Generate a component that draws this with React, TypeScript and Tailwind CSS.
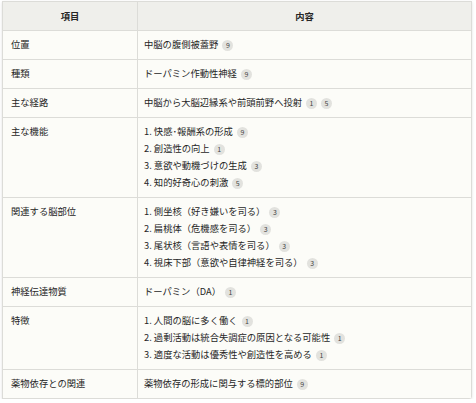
import React from "react";

type Item = { text: string; refs: number[] };
type Row = { label: string; items: Item[]; list?: boolean };

const rows: Row[] = [
  { label: "位置", items: [{ text: "中脳の腹側被蓋野", refs: [9] }] },
  { label: "種類", items: [{ text: "ドーパミン作動性神経", refs: [9] }] },
  { label: "主な経路", items: [{ text: "中脳から大脳辺縁系や前頭前野へ投射", refs: [1, 5] }] },
  {
    label: "主な機能",
    list: true,
    items: [
      { text: "快感･報酬系の形成", refs: [9] },
      { text: "創造性の向上", refs: [1] },
      { text: "意欲や動機づけの生成", refs: [3] },
      { text: "知的好奇心の刺激", refs: [5] },
    ],
  },
  {
    label: "関連する脳部位",
    list: true,
    items: [
      { text: "側坐核（好き嫌いを司る）", refs: [3] },
      { text: "扁桃体（危機感を司る）", refs: [3] },
      { text: "尾状核（言語や表情を司る）", refs: [3] },
      { text: "視床下部（意欲や自律神経を司る）", refs: [3] },
    ],
  },
  { label: "神経伝達物質", items: [{ text: "ドーパミン（DA）", refs: [1] }] },
  {
    label: "特徴",
    list: true,
    items: [
      { text: "人間の脳に多く働く", refs: [1] },
      { text: "過剰活動は統合失調症の原因となる可能性", refs: [1] },
      { text: "適度な活動は優秀性や創造性を高める", refs: [1] },
    ],
  },
  { label: "薬物依存との関連", items: [{ text: "薬物依存の形成に関与する標的部位", refs: [9] }] },
];

function Badge({ n }: { n: number }) {
  return (
    <span className="ml-[4px] inline-flex h-[11px] w-[11px] items-center justify-center rounded-full bg-[#e2e2de] align-middle text-[7px] leading-none text-[#444]">
      {n}
    </span>
  );
}

function Line({ item, idx }: { item: Item; idx?: number }) {
  return (
    <div className="leading-[17px] whitespace-nowrap">
      {idx !== undefined && <span>{idx}. </span>}
      <span>{item.text}</span>
      {item.refs.map((r, i) => (
        <Badge key={i} n={r} />
      ))}
    </div>
  );
}

export default function App() {
  return (
    <div
      className="bg-white pl-[2px] pt-[1px]"
      style={{ fontFamily: '"Noto Sans CJK JP", "Noto Sans", sans-serif' }}
    >
      <div className="w-[470px] overflow-hidden rounded-br-[3px] shadow-[0_1px_3px_rgba(0,0,0,0.12)]">
        <table className="w-full border-collapse text-[9.3px] text-[#262626]">
          <thead>
            <tr className="bg-[#efefeb]">
              <th className="w-[135px] border border-[#dcdcd8] pt-[6px] pb-[6px] text-center font-bold leading-[16px]">
                項目
              </th>
              <th className="border border-[#dcdcd8] pt-[6px] pb-[6px] text-center font-bold leading-[16px]">
                内容
              </th>
            </tr>
          </thead>
          <tbody className="bg-[#fcfcf8]">
            {rows.map((row, ri) => (
              <tr key={ri}>
                <td className="border border-[#dcdcd8] pl-[8px] pt-[5px] pb-[6px] align-top leading-[17px]">
                  {row.label}
                </td>
                <td className="border border-[#dcdcd8] pl-[6px] pt-[5px] pb-[6px] align-top">
                  {row.items.map((it, i) => (
                    <Line key={i} item={it} idx={row.list ? i + 1 : undefined} />
                  ))}
                </td>
              </tr>
            ))}
          </tbody>
        </table>
      </div>
    </div>
  );
}
